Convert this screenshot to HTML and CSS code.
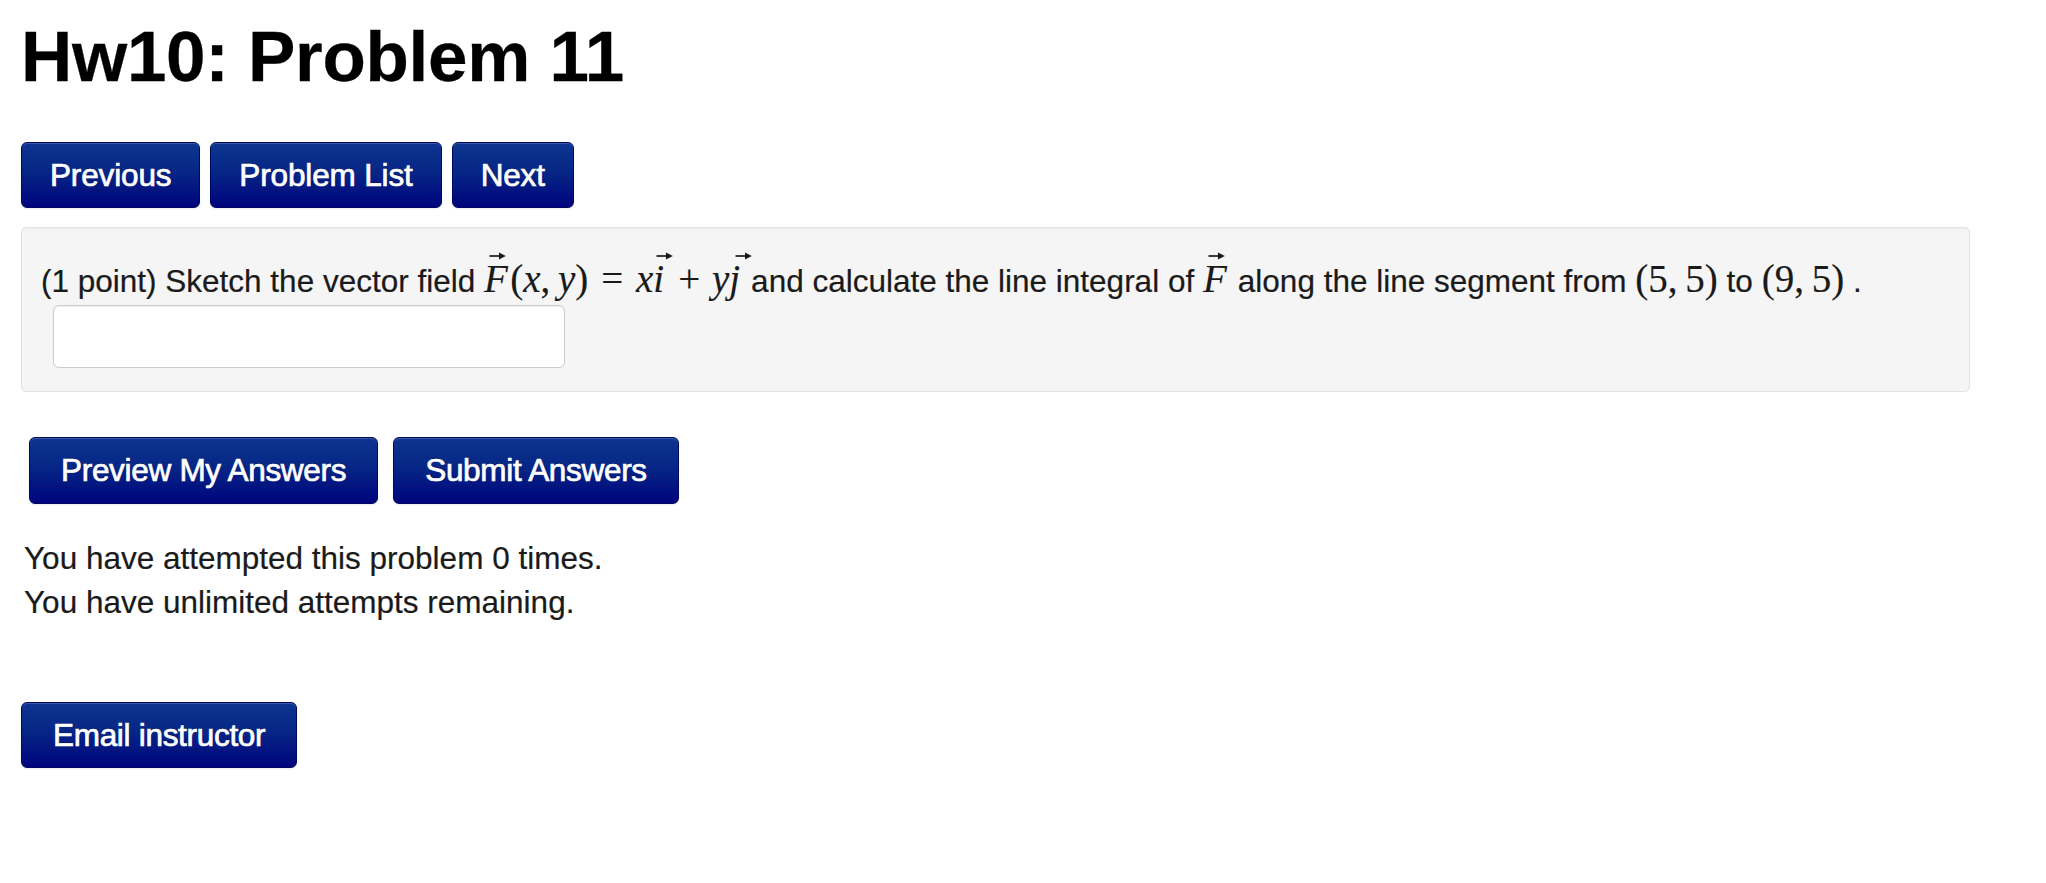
FILE: index.html
```html
<!DOCTYPE html>
<html lang="en">
<head>
<meta charset="utf-8">
<title>Hw10: Problem 11</title>
<link rel="stylesheet" href="styles.css">
</head>
<body>
<div class="page">
  <h1 class="title">Hw10: Problem 11</h1>

  <div class="nav">
    <a class="btn btn-nav">Previous</a>
    <a class="btn btn-nav">Problem List</a>
    <a class="btn btn-nav">Next</a>
  </div>

  <div class="problem">
    <div class="statement">(1 point) Sketch the vector field <span class="math"><span class="vec vec-f">F<svg class="arrow" viewBox="0 0 17 8" aria-hidden="true"><path d="M0.5 4 H12" /><polygon points="10,0.6 16.8,4 10,7.4" /></svg></span><span class="rm">(</span><i>x</i><span class="rm">,</span><span class="thin"></span><i>y</i><span class="rm">)</span><span class="op">=</span><i>x</i><span class="vec vec-i">i<svg class="arrow" viewBox="0 0 17 8" aria-hidden="true"><path d="M0.5 4 H12" /><polygon points="10,0.6 16.8,4 10,7.4" /></svg></span><span class="op bin">+</span><i>y</i><span class="vec vec-j">j<svg class="arrow" viewBox="0 0 17 8" aria-hidden="true"><path d="M0.5 4 H12" /><polygon points="10,0.6 16.8,4 10,7.4" /></svg></span></span> and calculate the line integral of <span class="math"><span class="vec vec-f">F<svg class="arrow" viewBox="0 0 17 8" aria-hidden="true"><path d="M0.5 4 H12" /><polygon points="10,0.6 16.8,4 10,7.4" /></svg></span></span> along the line segment from <span class="math"><span class="rm">(5,</span><span class="thin"></span><span class="rm">5)</span></span> to <span class="math"><span class="rm">(9,</span><span class="thin"></span><span class="rm">5)</span></span> .</div>
    <input class="answer" type="text" aria-label="answer">
  </div>

  <div class="actions">
    <a class="btn btn-tall">Preview My Answers</a>
    <a class="btn btn-tall">Submit Answers</a>
  </div>

  <div class="attempts">
    <p>You have attempted this problem 0 times.</p>
    <p>You have unlimited attempts remaining.</p>
  </div>

  <div class="email">
    <a class="btn btn-wide">Email instructor</a>
  </div>
</div>
</body>
</html>
```

FILE: styles.css
```css
html, body {
  margin: 0;
  padding: 0;
  background: #ffffff;
}

body {
  font-family: "Liberation Sans", Arial, Helvetica, sans-serif;
  font-size: 31.5px;
  line-height: 44px;
  color: #1a1a1a;
  -webkit-text-stroke: 0.2px #1a1a1a;
}

.page {
  padding: 17px 21px;
}

.title {
  margin: 0;
  font-size: 71px;
  line-height: 80px;
  font-weight: bold;
  color: #000;
  letter-spacing: -0.3px;
  -webkit-text-stroke: 0.3px #000;
}

.nav {
  display: flex;
  gap: 10px;
  margin-top: 45px;
}

.btn {
  display: inline-block;
  box-sizing: border-box;
  height: 66px;
  padding: 12px 28px;
  line-height: 40px;
  font-size: 31.5px;
  letter-spacing: -0.3px;
  color: #ffffff;
  -webkit-text-stroke: 0.7px #ffffff;
  text-decoration: none;
  white-space: nowrap;
  background: linear-gradient(to bottom, #0d358f 0%, #062685 45%, #00047d 100%);
  border: 1px solid #00075f;
  border-radius: 6px;
  text-shadow: 0 -1px 0 rgba(0, 0, 0, 0.3);
  box-shadow: inset 0 1px 0 rgba(255, 255, 255, 0.18), 0 1px 2px rgba(0, 0, 0, 0.08);
}

.btn-nav {
  letter-spacing: -0.15px;
}

.btn-tall {
  height: 67px;
  line-height: 41px;
  padding-left: 31px;
  padding-right: 31px;
}

.btn-wide {
  padding-left: 31px;
  padding-right: 31px;
}

.problem {
  box-sizing: border-box;
  width: 1949px;
  margin-top: 19px;
  padding: 31px 19px 23px;
  background: #f5f5f5;
  border: 1px solid #e3e3e3;
  border-radius: 5px;
  box-shadow: inset 0 1px 1px rgba(0, 0, 0, 0.04);
}

.statement {
  line-height: 45px;
  white-space: nowrap;
}

.math {
  font-family: "Liberation Serif", "Times New Roman", serif;
  font-size: 39px;
  line-height: 1;
  color: #1a1a1a;
  -webkit-text-stroke: 0.15px #1a1a1a;
  white-space: nowrap;
}

.math i {
  font-style: italic;
}

.rm {
  font-style: normal;
}

.thin {
  display: inline-block;
  width: 0.2em;
}

.op {
  display: inline-block;
  margin: 0 0.33em;
}

.op.bin {
  margin: 0 0.3em;
}

.vec {
  position: relative;
  display: inline-block;
  font-style: italic;
  padding-right: 0.06em;
}

.arrow {
  position: absolute;
  top: -7px;
  width: 17px;
  height: 8px;
  fill: #1a1a1a;
  stroke: #1a1a1a;
  stroke-width: 1.7;
}

.arrow polygon {
  stroke: none;
}

.vec-f .arrow {
  left: 5px;
}

.vec-i .arrow {
  left: 3px;
}

.vec-j .arrow {
  left: 6px;
}

.answer {
  display: block;
  box-sizing: border-box;
  width: 512px;
  height: 63px;
  margin: 1px 0 0 12px;
  padding: 6px 12px;
  font-size: 28px;
  background: #ffffff;
  border: 1px solid #cccccc;
  border-radius: 6px;
  box-shadow: inset 0 1px 1px rgba(0, 0, 0, 0.075);
}

.actions {
  display: flex;
  gap: 15px;
  margin-top: 45px;
  margin-left: 8px;
}

.attempts {
  margin-top: 32px;
  padding-left: 3px;
}

.attempts p {
  margin: 0;
  line-height: 44px;
}

.email {
  margin-top: 78px;
  display: flex;
}
```
